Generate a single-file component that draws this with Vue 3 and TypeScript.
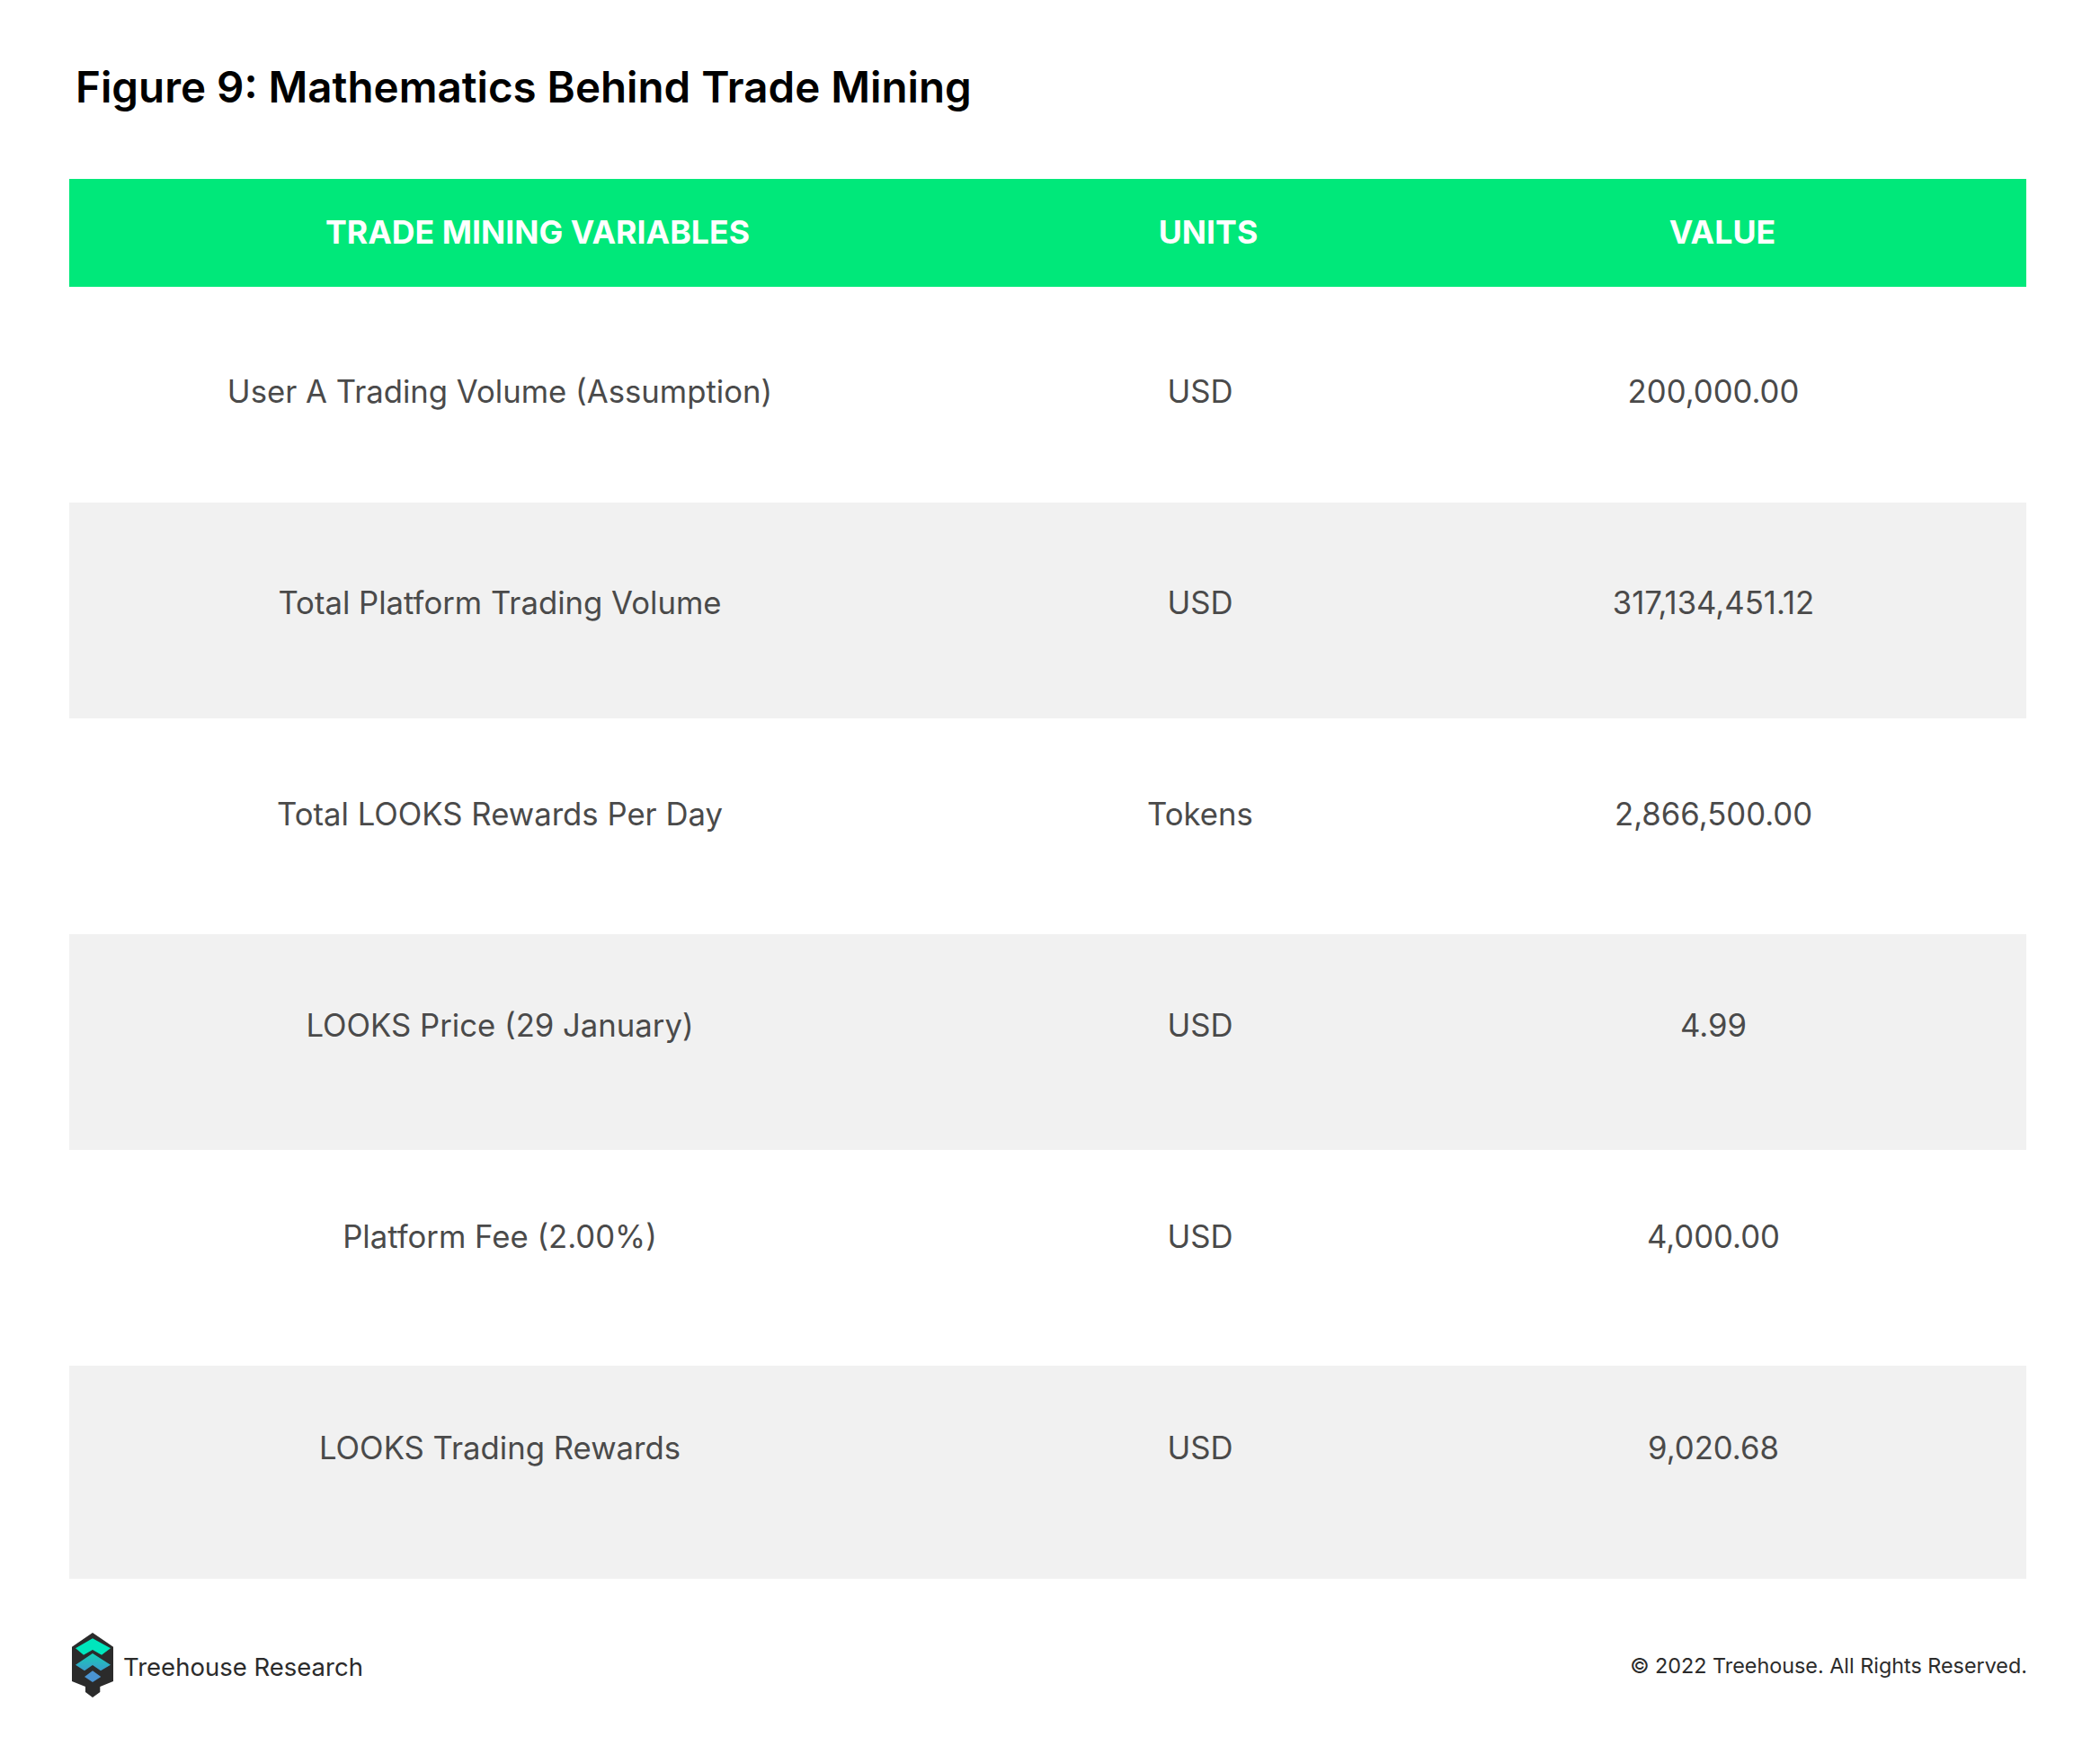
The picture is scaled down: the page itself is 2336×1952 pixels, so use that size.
<script setup lang="ts">
interface Row { name: string; unit: string; value: string }
const rows: Row[] = [
  { name: 'User A Trading Volume (Assumption)', unit: 'USD', value: '200,000.00' },
  { name: 'Total Platform Trading Volume', unit: 'USD', value: '317,134,451.12' },
  { name: 'Total LOOKS Rewards Per Day', unit: 'Tokens', value: '2,866,500.00' },
  { name: 'LOOKS Price (29 January)', unit: 'USD', value: '4.99' },
  { name: 'Platform Fee (2.00%)', unit: 'USD', value: '4,000.00' },
  { name: 'LOOKS Trading Rewards', unit: 'USD', value: '9,020.68' },
]
const rowPad = (i: number): string => `${94 - i * 5}px`
</script>

<template>
  <div class="page">
    <h1 class="title">Figure 9: Mathematics Behind Trade Mining</h1>
    <div class="table">
      <div class="head">
        <div>TRADE MINING VARIABLES</div>
        <div>UNITS</div>
        <div>VALUE</div>
      </div>
      <div
        v-for="(r, i) in rows"
        :key="r.name"
        class="row"
        :class="{ alt: i % 2 === 1 }"
        :style="{ paddingTop: rowPad(i) }"
      >
        <div>{{ r.name }}</div>
        <div>{{ r.unit }}</div>
        <div>{{ r.value }}</div>
      </div>
    </div>
    <div class="foot">
      <div class="brand">
        <svg class="logo" width="46" height="72" viewBox="0 0 46 72">
          <defs>
            <linearGradient id="g2" x1="0" y1="0" x2="0" y2="1">
              <stop offset="0" stop-color="#14d0b6" />
              <stop offset="1" stop-color="#3a9bcb" />
            </linearGradient>
          </defs>
          <path d="M23 0 L46 15.700 V54 L31.300 60 V66 L23 72 L15 66 V60 L0 54 V15.700 Z" fill="#2b2b2b" />
          <path d="M23 6.300 L43 17.300 L33 24.700 L23 19 L13 24.700 L4 17.300 Z" fill="#00e6bd" />
          <path d="M23 23 L43 35.700 L32 42.300 L23 36 L14 42.300 L4 35.700 Z" fill="url(#g2)" />
          <path d="M23 42.300 L32.300 49 L23 55 L14 49 Z" fill="#4a94d2" />
        </svg>
        <span>Treehouse Research</span>
      </div>
      <div class="copy">© 2022 Treehouse. All Rights Reserved.</div>
    </div>
  </div>
</template>

<style>
body { margin: 0; background: #fff; }
</style>

<style scoped>
.page {
  width: 2336px;
  height: 1952px;
  box-sizing: border-box;
  padding: 0 82px 0 77px;
  background: #fff;
  font-family: "Inter", "Liberation Sans", sans-serif;
}
.title {
  margin: 0;
  padding: 67px 0 0 7px;
  height: 199px;
  box-sizing: border-box;
  font-size: 47.500px;
  line-height: 60px;
  font-weight: 600;
  color: #000;
}
.table { display: flex; flex-direction: column; }
.head {
  height: 120px;
  background: #00e87a;
  display: grid;
  grid-template-columns: 1042px 450px 1fr;
  align-items: center;
  text-align: center;
  color: #fff;
  font-size: 35.700px;
  font-weight: 700;
  padding-bottom: 2px;
  box-sizing: border-box;
}
.head > div:last-child { padding-left: 9px; }
.row {
  height: 240px;
  display: grid;
  grid-template-columns: 958px 600px 1fr;
  box-sizing: border-box;
  padding-right: 77px;
  text-align: center;
  color: #4a4a4a;
  font-size: 34.700px;
  line-height: 44px;
}
.row:last-child { height: 237px; }
.alt { background: #f1f1f1; }
.foot {
  display: flex;
  justify-content: space-between;
  align-items: center;
  padding-top: 60px;
  color: #2b2b2b;
}
.brand { display: flex; align-items: center; gap: 11px; font-size: 27.500px; }
.logo { margin-left: 3px; margin-bottom: 4px; }
.copy { font-size: 23.350px; margin-bottom: 3px; margin-right: -1px; }
</style>
